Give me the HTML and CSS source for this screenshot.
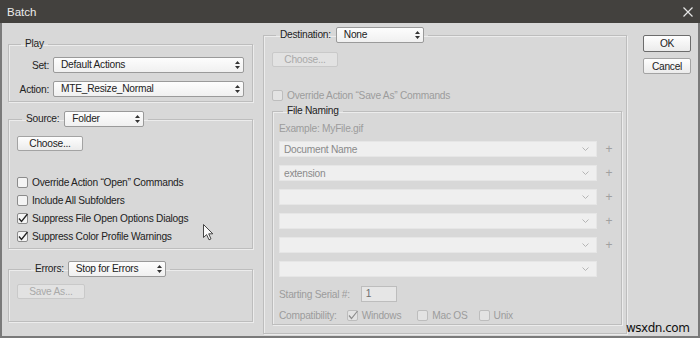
FILE: index.html
```html
<!DOCTYPE html>
<html>
<head lang="en">
    <meta charset="UTF-8">
    <title>Batch</title>
    <link rel="stylesheet" href="styles.css">
</head>
<body>
    <div class="window">
        <div class="titlebar">
            <span class="title">Batch</span>
            <svg class="close" width="10" height="10" viewBox="0 0 10 10"><path d="M0.5 0.5L9.5 9.5M9.5 0.5L0.5 9.5" stroke="#e6e6e6" stroke-width="1.2"/></svg>
        </div>
        <div class="panel">
            <!--左侧-->
            <div class="col-left">
                <fieldset class="group play">
                    <legend>Play</legend>
                    <div class="form-grid">
                        <label>Set:</label>
                        <div class="select"><span>Default Actions</span><svg class="updown" width="5" height="8" viewBox="0 0 5 8"><path d="M2.5 0L5 3H0zM2.5 8L0 5h5z" fill="#333"/></svg></div>
                        <label>Action:</label>
                        <div class="select"><span>MTE_Resize_Normal</span><svg class="updown" width="5" height="8" viewBox="0 0 5 8"><path d="M2.5 0L5 3H0zM2.5 8L0 5h5z" fill="#333"/></svg></div>
                    </div>
                </fieldset>

                <fieldset class="group source">
                    <legend><span class="legend-row"><label>Source:</label><span class="select w80"><span>Folder</span><svg class="updown" width="5" height="8" viewBox="0 0 5 8"><path d="M2.5 0L5 3H0zM2.5 8L0 5h5z" fill="#333"/></svg></span></span></legend>
                    <button class="btn choose">Choose...</button>
                    <ul class="checks">
                        <li><span class="cb"></span>Override Action “Open” Commands</li>
                        <li><span class="cb"></span>Include All Subfolders</li>
                        <li><span class="cb"><svg width="12" height="11" viewBox="0 0 12 11"><path d="M2 5.5L4.5 8.5L10.5 1" fill="none" stroke="#222" stroke-width="1.3"/></svg></span>Suppress File Open Options Dialogs</li>
                        <li><span class="cb"><svg width="12" height="11" viewBox="0 0 12 11"><path d="M2 5.5L4.5 8.5L10.5 1" fill="none" stroke="#222" stroke-width="1.3"/></svg></span>Suppress Color Profile Warnings</li>
                    </ul>
                </fieldset>

                <fieldset class="group errors">
                    <legend><span class="legend-row"><label>Errors:</label><span class="select w98"><span>Stop for Errors</span><svg class="updown" width="5" height="8" viewBox="0 0 5 8"><path d="M2.5 0L5 3H0zM2.5 8L0 5h5z" fill="#333"/></svg></span></span></legend>
                    <button class="btn saveas" disabled>Save As...</button>
                </fieldset>
            </div>

            <!--右侧-->
            <fieldset class="group dest">
                <legend><span class="legend-row"><label>Destination:</label><span class="select w88"><span>None</span><svg class="updown" width="5" height="8" viewBox="0 0 5 8"><path d="M2.5 0L5 3H0zM2.5 8L0 5h5z" fill="#333"/></svg></span></span></legend>
                <button class="btn choose" disabled>Choose...</button>
                <div class="check-row off override"><span class="cb"></span>Override Action “Save As” Commands</div>

                <fieldset class="group naming">
                    <legend>File Naming</legend>
                    <div class="example">Example: MyFile.gif</div>
                    <div class="name-grid">
                        <div class="dd"><span>Document Name</span><svg width="7" height="4" viewBox="0 0 7 4"><path d="M0.5 0.5L3.5 3.5L6.5 0.5" fill="none" stroke="#b5b5b5"/></svg></div>
                        <span class="plus">+</span>
                        <div class="dd"><span>extension</span><svg width="7" height="4" viewBox="0 0 7 4"><path d="M0.5 0.5L3.5 3.5L6.5 0.5" fill="none" stroke="#b5b5b5"/></svg></div>
                        <span class="plus">+</span>
                        <div class="dd"><span></span><svg width="7" height="4" viewBox="0 0 7 4"><path d="M0.5 0.5L3.5 3.5L6.5 0.5" fill="none" stroke="#b5b5b5"/></svg></div>
                        <span class="plus">+</span>
                        <div class="dd"><span></span><svg width="7" height="4" viewBox="0 0 7 4"><path d="M0.5 0.5L3.5 3.5L6.5 0.5" fill="none" stroke="#b5b5b5"/></svg></div>
                        <span class="plus">+</span>
                        <div class="dd"><span></span><svg width="7" height="4" viewBox="0 0 7 4"><path d="M0.5 0.5L3.5 3.5L6.5 0.5" fill="none" stroke="#b5b5b5"/></svg></div>
                        <span class="plus">+</span>
                        <div class="dd"><span></span><svg width="7" height="4" viewBox="0 0 7 4"><path d="M0.5 0.5L3.5 3.5L6.5 0.5" fill="none" stroke="#b5b5b5"/></svg></div>
                        <span></span>
                    </div>
                    <div class="serial"><label>Starting Serial #:</label><span class="input">1</span></div>
                    <div class="compat">
                        <label>Compatibility:</label>
                        <span class="check-row off"><span class="cb"><svg width="12" height="11" viewBox="0 0 12 11"><path d="M2 5.5L4.5 8.5L10.5 1" fill="none" stroke="#8c8c8c" stroke-width="1.2"/></svg></span>Windows</span>
                        <span class="check-row off mac"><span class="cb"></span>Mac OS</span>
                        <span class="check-row off"><span class="cb"></span>Unix</span>
                    </div>
                </fieldset>
            </fieldset>

            <div class="actions">
                <button class="btn default">OK</button>
                <button class="btn">Cancel</button>
            </div>
        </div>

        <svg class="cursor" width="12" height="17" viewBox="0 0 12 17"><path d="M0.5 0.5V13.5L3.6 10.6L6 15.8L8 14.9L5.7 9.8H9.8Z" fill="#fafafa" stroke="#333" stroke-width="0.9"/></svg>
        <div class="watermark">wsxdn.com</div>
    </div>
</body>
</html>
```

FILE: styles.css
```css
* {
    box-sizing: border-box;
}

body {
    margin: 0;
    background: #d8d8d8;
    font-family: "Liberation Sans", Arial, sans-serif;
    font-size: 10.2px;
    letter-spacing: -0.25px;
    color: #222;
}

ul, li {
    margin: 0;
    padding: 0;
    list-style: none;
}

.window {
    position: relative;
    width: 700px;
    height: 338px;
    background: #d8d8d8;
    overflow: hidden;
}

.titlebar {
    height: 23px;
    background: #43413e;
    color: #ececec;
    font-size: 11.5px;
    letter-spacing: 0;
    display: flex;
    align-items: center;
    justify-content: space-between;
    padding: 0 7px 0 7px;
}

.panel {
    height: 315px;
    border: 2px solid #7a7a7a;
    border-top: 0;
    display: flex;
    align-items: flex-start;
    padding-left: 6px;
}

.col-left {
    width: 245px;
    padding-top: 14px;
}

/* 分组框 */
.group {
    margin: 0;
    padding: 0 8px;
    min-width: 0;
    border: 1px solid #bdbdbd;
    box-shadow: inset 1px 1px 0 #ececec, 1px 1px 0 #ececec;
}

.group legend {
    padding: 0 4px;
    margin-left: 4px;
    line-height: 14px;
}

.legend-row {
    display: inline-flex;
    align-items: center;
    gap: 5px;
}

.play {
    padding-bottom: 4px;
}

.form-grid {
    display: grid;
    grid-template-columns: 32px 1fr;
    column-gap: 4px;
    row-gap: 8px;
    margin-top: 6px;
    align-items: center;
}

.form-grid label {
    text-align: right;
}

.source {
    margin-top: 9px;
    padding-bottom: 3px;
}

.source legend {
    margin-left: 5px;
}

.errors {
    margin-top: 12px;
    padding-bottom: 22px;
}

.errors legend {
    margin-left: 14px;
}

.errors .legend-row {
    gap: 4px;
}

/* 下拉框 */
.select {
    display: flex;
    align-items: center;
    justify-content: space-between;
    height: 16px;
    padding: 0 3px 0 7px;
    background: linear-gradient(#fdfdfd, #f0f0f0);
    border: 1px solid #9a9a9a;
    border-radius: 2px;
    line-height: 14px;
}

.w80 { width: 80px; }
.w88 { width: 88px; }
.w98 { width: 98px; }

/* 按钮 */
.btn {
    display: block;
    height: 15px;
    padding: 0;
    font: inherit;
    letter-spacing: inherit;
    line-height: 13px;
    color: #222;
    background: linear-gradient(#fefefe, #ebebeb);
    border: 1px solid #a3a3a3;
    border-radius: 2px;
}

.btn:disabled {
    color: #a9a9a9;
    background: #e2e2e2;
    border-color: #c9c9c9;
}

.choose {
    width: 66px;
    margin-top: 9px;
}

.saveas {
    width: 68px;
    margin-top: 7px;
}

/* 复选框 */
.checks {
    margin-top: 22px;
}

.checks li,
.check-row {
    display: flex;
    align-items: center;
    gap: 4px;
    height: 18px;
}

.cb {
    position: relative;
    width: 11px;
    height: 11px;
    flex: none;
    background: #f4f4f4;
    border: 1px solid #8c8c8c;
    border-radius: 2px;
}

.cb svg {
    position: absolute;
    left: -1px;
    top: -1px;
}

.off {
    color: #9c9c9c;
}

.off .cb {
    background: #e3e3e3;
    border-color: #bdbdbd;
}

/* 目标 */
.dest {
    width: 364px;
    margin-left: 10px;
    margin-top: 4px;
    padding: 0 4px 8px 8px;
}

.dest legend {
    line-height: 16px;
}

.override {
    margin-top: 22px;
    height: 12px;
}

.naming {
    margin-top: 2px;
    padding: 0 0 3px 6px;
}

.naming legend {
    margin-left: 4px;
}

.example {
    margin-top: 4px;
    line-height: 12px;
    color: #9c9c9c;
}

.name-grid {
    display: grid;
    grid-template-columns: 318px 1fr;
    row-gap: 8px;
    margin-top: 6px;
    align-items: center;
}

.dd {
    display: flex;
    align-items: center;
    justify-content: space-between;
    height: 16px;
    padding: 0 7px 0 4px;
    background: #efefef;
    border: 1px solid #e6e6e6;
    color: #8a8a8a;
}

.plus {
    text-align: center;
    color: #a0a0a0;
    font-size: 12px;
}

.serial {
    display: flex;
    align-items: center;
    gap: 11px;
    margin-top: 9px;
    color: #9c9c9c;
}

.input {
    width: 36px;
    height: 16px;
    padding-left: 4px;
    line-height: 14px;
    color: #6e6e6e;
    background: #e6e6e6;
    border: 1px solid #bdbdbd;
}

.compat {
    display: flex;
    align-items: center;
    height: 12px;
    margin-top: 7px;
    color: #9c9c9c;
}

.compat label {
    margin-right: 10px;
}

.compat .check-row {
    height: 12px;
    margin-right: 16px;
}

.compat .mac {
    margin-right: 11px;
}

/* 确定/取消 */
.actions {
    width: 48px;
    margin-left: 16px;
    margin-top: 12px;
    display: flex;
    flex-direction: column;
    gap: 6px;
}

.actions .btn {
    width: 48px;
    height: 16px;
}

.actions .default {
    height: 17px;
    border-color: #6c6c6c;
}

.cursor {
    position: absolute;
    left: 203px;
    top: 224px;
}

.watermark {
    position: absolute;
    left: 626px;
    top: 321px;
    font-family: "DejaVu Sans", sans-serif;
    font-size: 12px;
    letter-spacing: -0.5px;
    color: #111;
}
```
